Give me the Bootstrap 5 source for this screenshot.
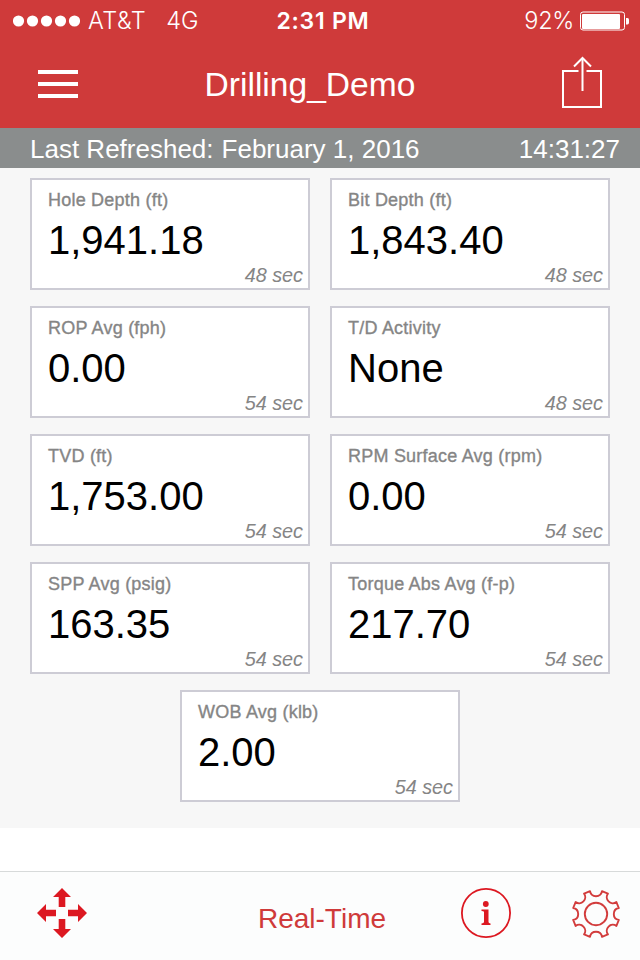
<!DOCTYPE html>
<html lang="en">
<head>
<meta charset="utf-8">
<meta name="viewport" content="width=device-width, initial-scale=1">
<title>Drilling_Demo</title>
<link href="https://cdn.jsdelivr.net/npm/bootstrap@5.3.0/dist/css/bootstrap.min.css" rel="stylesheet">
<style>
  body { font-family: "Liberation Sans", Arial, sans-serif; background: #fff; width: 640px; height: 960px; }
  svg { display: block; flex: none; }
  .app-top { background: #cf3a3a; height: 128px; }
  .status { height: 40px; font: 400 23.5px/40px Inter, sans-serif; padding: 1px 11px 0 13px; }
  .status > div { flex: 1 1 0; }
  .status .clock { font-weight: 600; font-size: 23px; letter-spacing: .75px; padding-left: 4px; }
  .carrier { letter-spacing: .5px; font-weight: 300; margin-left: 8px; }
  .network { font-weight: 300; margin-left: 20px; }
  .battery-text { font-weight: 300; margin-right: 6px; letter-spacing: -.3px; }
  .titlebar { height: 88px; padding: 0 37px 0 38px; }
  .screen-title { font-size: 33.6px; line-height: 40px; font-weight: 400; margin-right: 20px; padding-top: 2px; }
  .share-icon { margin-bottom: 4px; }
  .refresh { background: #8a8d8d; height: 40px; padding: 0 20px 0 30px; font-size: 26px; line-height: 42px; }
  .panel-area { background: #f7f7f7; height: 660px; padding: 10px 30px 26px; column-gap: 20px; row-gap: 16px; }
  .tile { width: 280px; height: 112px; border: 2px solid #cdccd5; border-radius: 0; padding: 10px 5px 3px 16px; background: #fff; }
  .tile-label { font-size: 18px; line-height: 20px; letter-spacing: .22px; color: #858585; -webkit-text-stroke: .35px #858585; }
  .tile-value { font-size: 40px; line-height: 40px; margin-top: 10px; color: #000; }
  .tile-age { font-size: 19.8px; line-height: 20px; font-style: italic; color: #858585; }
  .tabs { height: 89px; margin-top: 43px; border-top: 1px solid #d7dada; background: #fcfdfd; padding: 0 19px 0 37px; }
  .tab-title { font-size: 28px; line-height: 32px; color: #cf3a3a; padding-top: 7px; }
  .gear-icon { margin-left: 60px; }
</style>
</head>
<body class="overflow-hidden">
<header class="app-top text-white">
  <div class="status d-flex align-items-center">
    <div class="d-flex align-items-center">
      <svg width="67" height="12" fill="#fff"><circle cx="5.5" cy="6" r="5.6"/><circle cx="19.5" cy="6" r="5.6"/><circle cx="33.5" cy="6" r="5.6"/><circle cx="47.5" cy="6" r="5.6"/><circle cx="61.5" cy="6" r="5.6"/></svg>
      <span class="carrier">AT&amp;T</span><span class="network">4G</span>
    </div>
    <div class="clock text-center text-nowrap">2:31 PM</div>
    <div class="d-flex align-items-center justify-content-end">
      <span class="battery-text">92%</span>
      <svg width="49" height="20"><rect x=".5" y="1" width="44" height="18" rx="2.5" fill="none" stroke="#fff"/><rect x="2" y="3" width="38" height="15" rx="1" fill="#fff"/><path d="M46 7h1.500q1.500 0 1.500 1.500v3q0 2-1.500 2H46z" fill="#fff"/></svg>
    </div>
  </div>
  <nav class="titlebar d-flex align-items-center justify-content-between">
    <svg width="40" height="28" fill="#fff"><path d="M0 0h40v4H0zM0 12h40v4H0zM0 24h40v4H0z"/></svg>
    <h1 class="screen-title mb-0">Drilling_Demo</h1>
    <svg class="share-icon" width="41" height="54" viewBox="0 0 41 54" fill="none" stroke="#fff" stroke-width="2"><path d="M16.500 16H1v36h38V16H24.500M20.500 36V3"/><path d="M12 11.500l8.500-8.500 8.500 8.500"/></svg>
  </nav>
</header>
<div class="refresh d-flex justify-content-between text-white">
  <div class="d-flex"><span class="me-2">Last Refreshed:</span><span>February 1, 2016</span></div>
  <span>14:31:27</span>
</div>
<main class="panel-area d-flex flex-wrap justify-content-center align-content-start">
  <section class="tile d-flex flex-column"><div class="tile-label">Hole Depth (ft)</div><div class="tile-value">1,941.18</div><div class="tile-age text-end mt-auto">48 sec</div></section>
  <section class="tile d-flex flex-column"><div class="tile-label">Bit Depth (ft)</div><div class="tile-value">1,843.40</div><div class="tile-age text-end mt-auto">48 sec</div></section>
  <section class="tile d-flex flex-column"><div class="tile-label">ROP Avg (fph)</div><div class="tile-value">0.00</div><div class="tile-age text-end mt-auto">54 sec</div></section>
  <section class="tile d-flex flex-column"><div class="tile-label">T/D Activity</div><div class="tile-value">None</div><div class="tile-age text-end mt-auto">48 sec</div></section>
  <section class="tile d-flex flex-column"><div class="tile-label">TVD (ft)</div><div class="tile-value">1,753.00</div><div class="tile-age text-end mt-auto">54 sec</div></section>
  <section class="tile d-flex flex-column"><div class="tile-label">RPM Surface Avg (rpm)</div><div class="tile-value">0.00</div><div class="tile-age text-end mt-auto">54 sec</div></section>
  <section class="tile d-flex flex-column"><div class="tile-label">SPP Avg (psig)</div><div class="tile-value">163.35</div><div class="tile-age text-end mt-auto">54 sec</div></section>
  <section class="tile d-flex flex-column"><div class="tile-label">Torque Abs Avg (f-p)</div><div class="tile-value">217.70</div><div class="tile-age text-end mt-auto">54 sec</div></section>
  <section class="tile d-flex flex-column"><div class="tile-label">WOB Avg (klb)</div><div class="tile-value">2.00</div><div class="tile-age text-end mt-auto">54 sec</div></section>
</main>
<footer class="tabs d-flex">
  <svg class="mt-3" width="50" height="50" viewBox="-25 -25 50 50" fill="#dc1821"><g id="arrow"><path d="M0-25l9 9H3.300v10h-6.600v-10H-9z"/></g><use href="#arrow" transform="rotate(90)"/><use href="#arrow" transform="rotate(180)"/><use href="#arrow" transform="rotate(270)"/></svg>
  <div class="tab-title mt-4 ms-auto me-auto ps-5"><span class="ps-5">Real-Time</span></div>
  <svg class="mt-3" width="50" height="50" viewBox="0 0 50 50"><circle cx="25" cy="25" r="24.100" fill="none" stroke="#dc1821" stroke-width="1.800"/><circle cx="24.800" cy="16" r="2.900" fill="#dc1821"/><path d="M20.500 21.500h7v12.500q0 1.300 2 1.500v1.500h-9v-1.500q2.500-.200 2.500-1.500v-10q0-1-2.500-1z" fill="#dc1821"/></svg>
  <svg class="mt-3 gear-icon" width="50" height="50" viewBox="-25 -26 50 50" fill="none" stroke="#d23c3c" stroke-width="1.900" stroke-linejoin="round"><circle r="11.200"/><path d="M-6-22.800A6.100 6.100 0 0 0 6-22.800L11.900-20.400A6.100 6.100 0 0 0 20.400-11.900L22.800-6A6.100 6.100 0 0 0 22.800 6L20.400 11.900A6.100 6.100 0 0 0 11.900 20.400L6 22.800A6.100 6.100 0 0 0-6 22.800L-11.900 20.400A6.100 6.100 0 0 0-20.400 11.900L-22.800 6A6.100 6.100 0 0 0-22.800-6L-20.400-11.900A6.100 6.100 0 0 0-11.900-20.400Z"/></svg>
</footer>
<script src="https://cdn.jsdelivr.net/npm/bootstrap@5.3.0/dist/js/bootstrap.bundle.min.js"></script>
</body>
</html>
